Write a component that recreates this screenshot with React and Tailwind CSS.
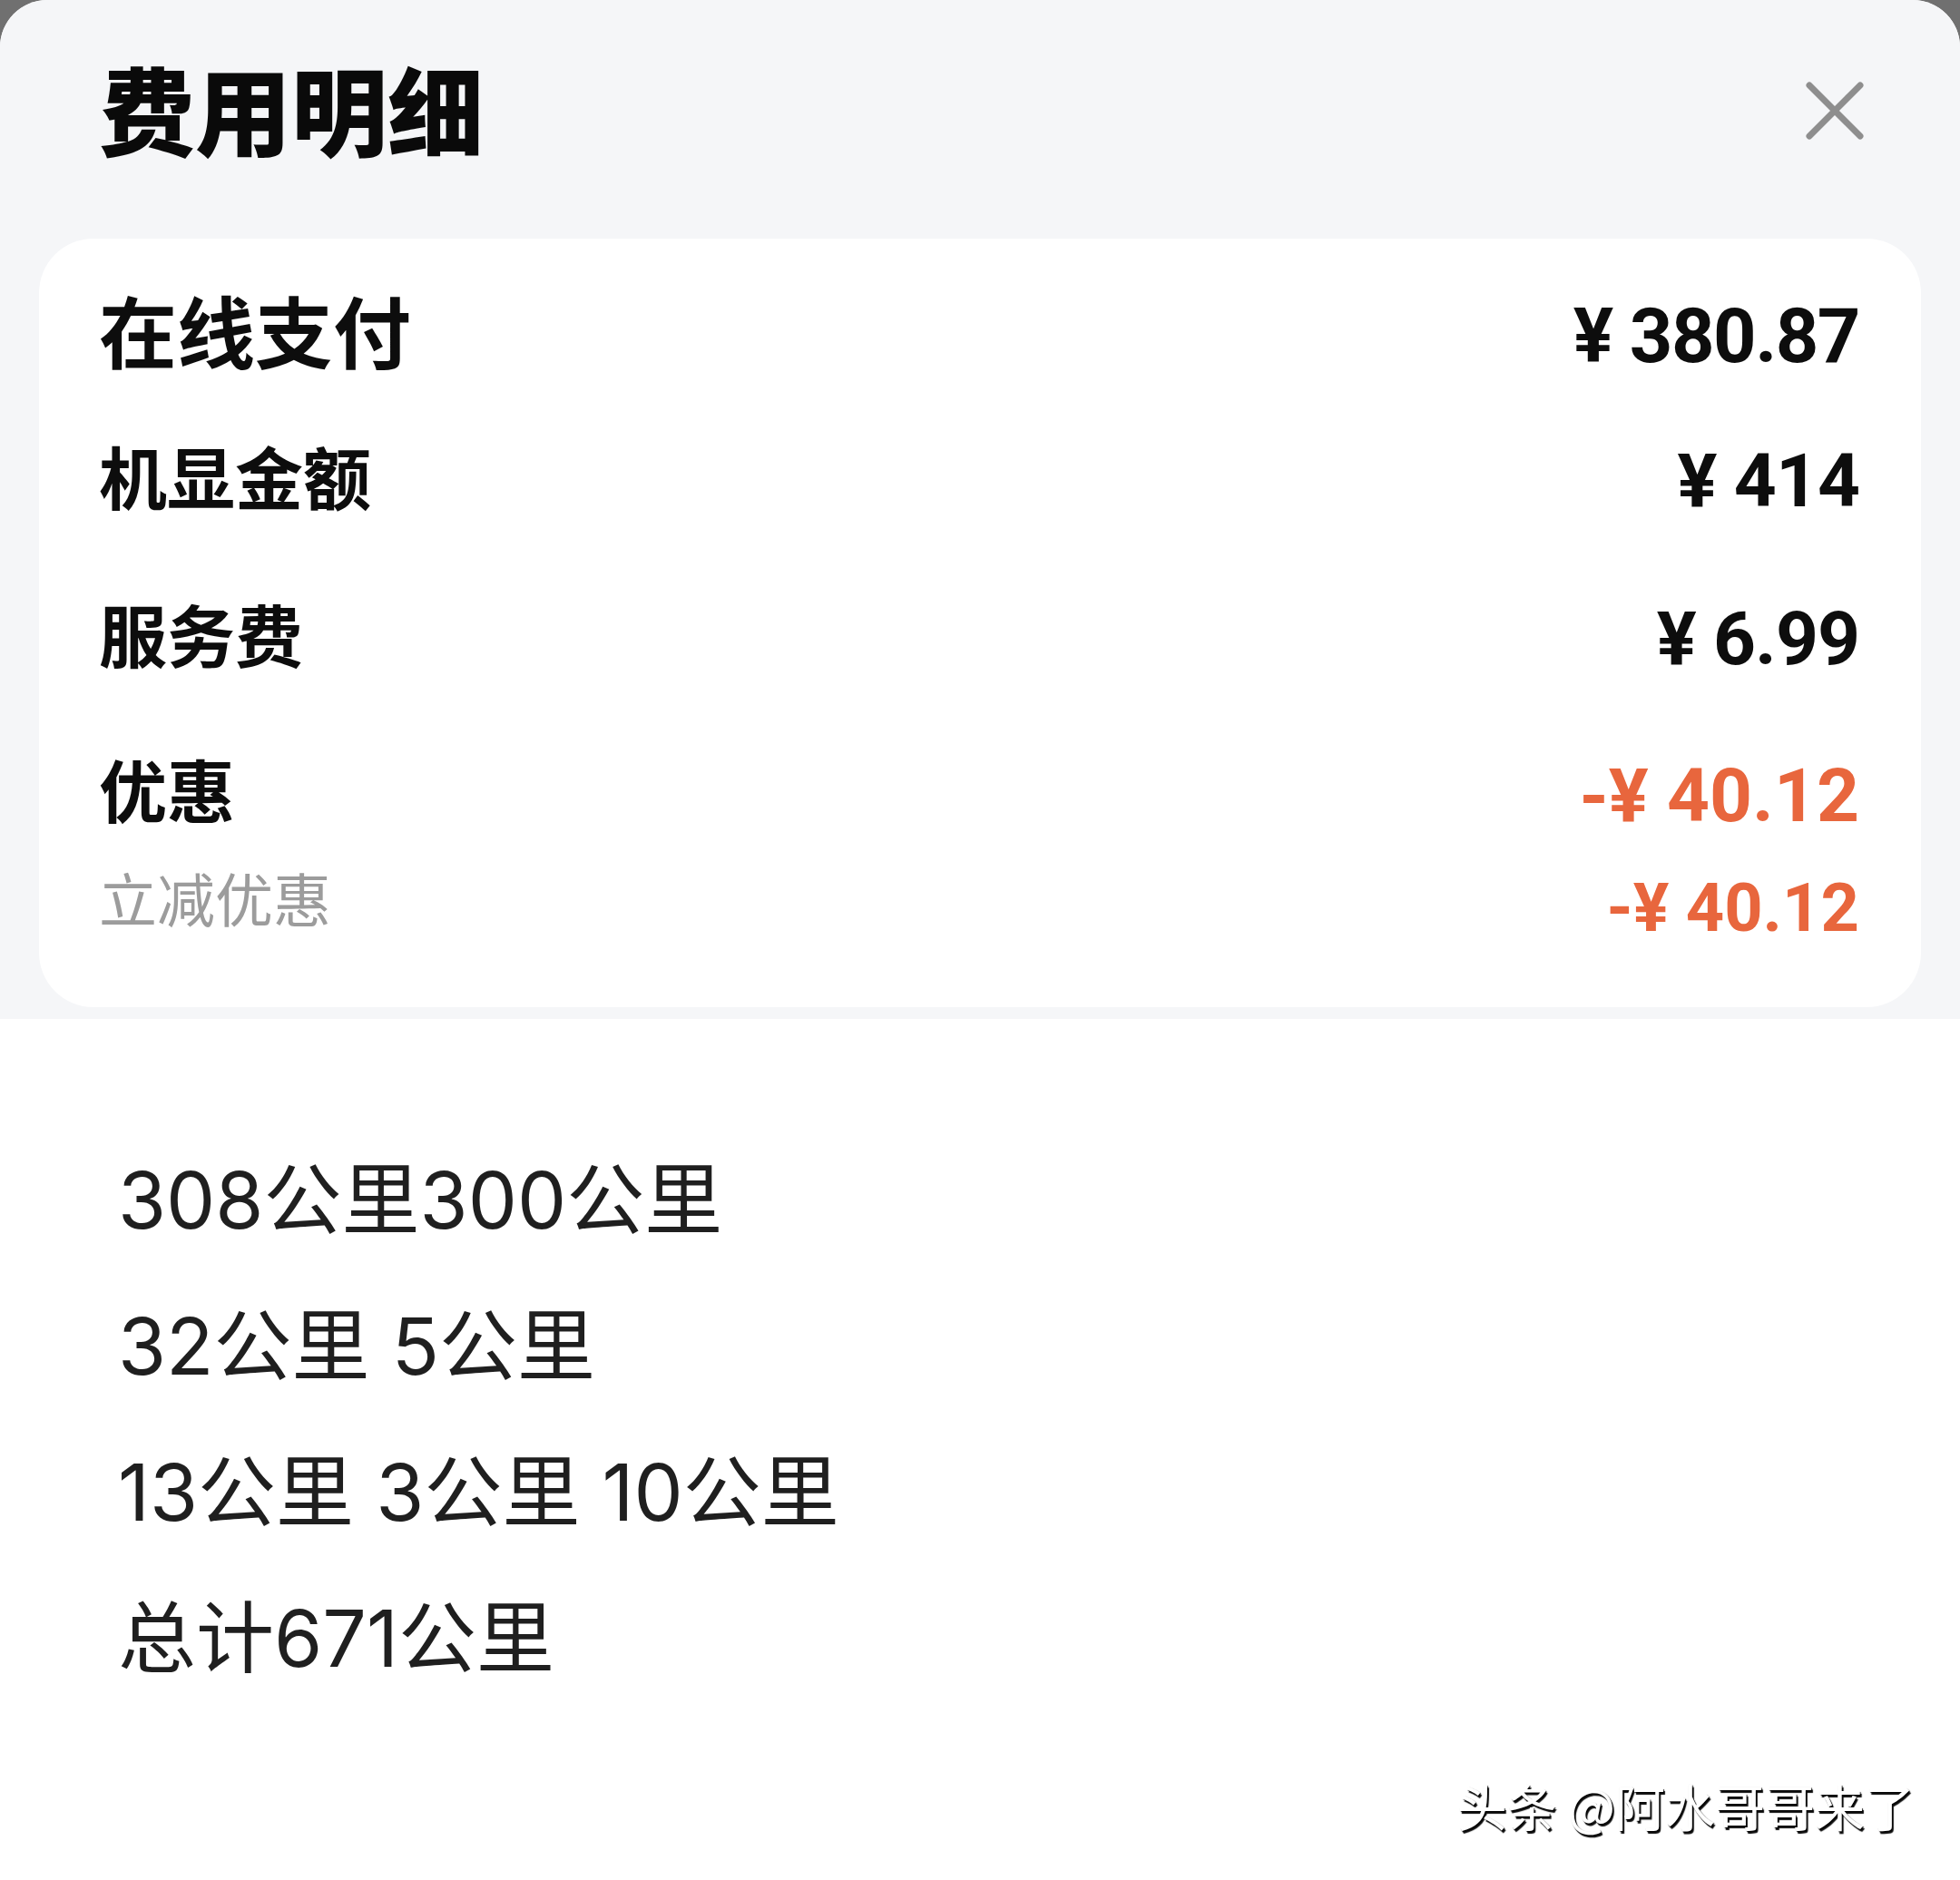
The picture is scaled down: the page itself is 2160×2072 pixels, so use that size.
import React from "react";

const cjk = { fontFamily: '"Noto Sans CJK SC", sans-serif' };
const num = { fontFamily: 'Roboto, "Noto Sans CJK SC", sans-serif' };

function Row({ h, label, labelCls, value, valueCls }) {
  return (
    <div className={`flex items-center justify-between ${h}`}>
      <span className={labelCls} style={cjk}>{label}</span>
      <span className={valueCls} style={num}>{value}</span>
    </div>
  );
}

export default function App() {
  return (
    <div className="w-[2160px] h-[2072px] bg-[#707070] overflow-hidden">
      <div className="relative h-full rounded-t-[52px] bg-white overflow-hidden flex flex-col">
        <div className="h-[1123px] bg-[#f5f6f8] px-[43px] flex flex-col">
          <div className="h-[248px] flex items-center justify-between pl-[66px] pr-[62px] pb-[12px]">
            <span className="text-[106px] leading-none font-black text-[#0a0a0a]" style={cjk}>
              费用明细
            </span>
            <svg width="66" height="66" viewBox="0 0 66 66" fill="none" className="mt-[8px]">
              <path d="M5 5 L61 61 M61 5 L5 61" stroke="#8e8e8e" strokeWidth="7" strokeLinecap="round" />
            </svg>
          </div>
          <div className="mt-[15px] h-[847px] bg-white rounded-[60px] pl-[66px] pr-[68px] pt-[40px] flex flex-col">
            <Row
              h="h-[120px]"
              label="在线支付"
              labelCls="text-[86px] leading-none font-bold text-[#0d0d0d]"
              value="¥ 380.87"
              valueCls="text-[83px] leading-none font-bold text-[#0d0d0d] pt-[14px] tracking-[-1.5px]"
            />
            <Row
              h="h-[200px]"
              label="机显金额"
              labelCls="text-[75px] leading-none font-bold text-[#0d0d0d]"
              value="¥ 414"
              valueCls="text-[82px] leading-none font-bold text-[#0d0d0d] pt-[14px] tracking-[-1px]"
            />
            <Row
              h="h-[148px]"
              label="服务费"
              labelCls="text-[75px] leading-none font-bold text-[#0d0d0d]"
              value="¥ 6.99"
              valueCls="text-[82px] leading-none font-bold text-[#0d0d0d] pt-[14px] tracking-[-1px]"
            />
            <Row
              h="h-[194px]"
              label="优惠"
              labelCls="text-[75px] leading-none font-bold text-[#0d0d0d]"
              value="-¥ 40.12"
              valueCls="text-[82px] leading-none font-bold text-[#e8663d] pt-[18px]"
            />
            <Row
              h="h-[52px]"
              label="立减优惠"
              labelCls="text-[64px] leading-none font-normal text-[#9c9c9c] -mt-[6px]"
              value="-¥ 40.12"
              valueCls="text-[74px] leading-none font-bold text-[#e8663d] pt-[20px]"
            />
          </div>
        </div>
        <div
          className="flex-1 bg-white pl-[130px] pt-[120px] text-[86px] leading-[161px] text-[#1f1f1f]"
          style={{ fontFamily: 'Inter, "Noto Sans CJK SC", sans-serif' }}
        >
          <div>308公里300公里</div>
          <div>32公里 5公里</div>
          <div>13公里 3公里 10公里</div>
          <div>总计671公里</div>
        </div>
        <div
          className="absolute right-[50px] top-[1962px] text-[55px] leading-none text-white [text-shadow:2px_3px_1px_rgba(0,0,0,0.95),1px_1px_1px_rgba(0,0,0,0.8)]"
          style={cjk}
        >
          头条 @阿水哥哥来了
        </div>
      </div>
    </div>
  );
}
